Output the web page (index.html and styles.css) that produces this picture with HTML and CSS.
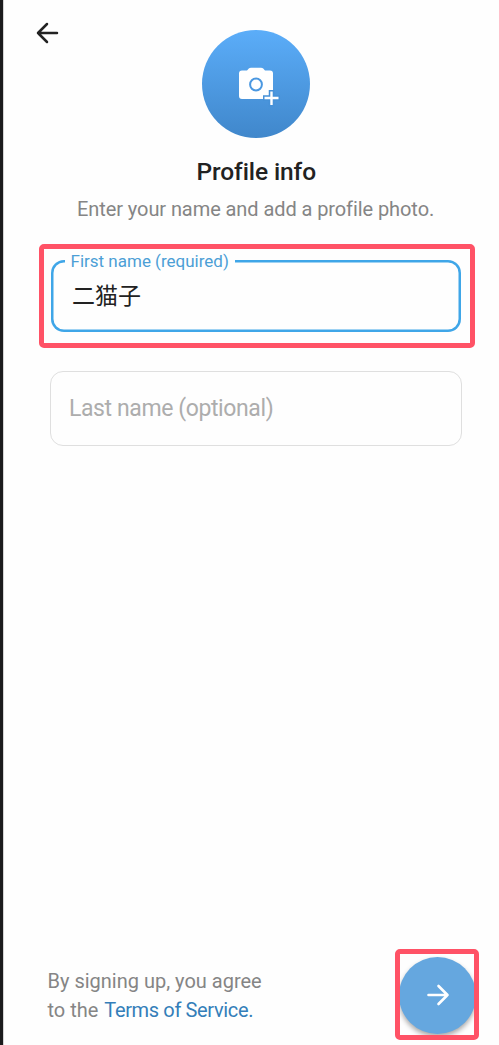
FILE: index.html
```html
<!DOCTYPE html>
<html lang="en">
<head>
<meta charset="utf-8">
<title>Profile info</title>
<link rel="stylesheet" href="styles.css">
</head>
<body>
<main class="screen">
  <header class="top">
    <svg class="back" width="24" height="24" viewBox="0 0 24 24"><path d="M22 12H3M12 3L3 12l9 9"/></svg>
    <div class="avatar">
      <svg class="camera" width="44" height="42" viewBox="0 0 44 42">
        <path class="solid" d="M6 5.500h5l1.800-2q.8-.8 2.200-.8h10q1.400 0 2.200.8l1.800 2h5q3 0 3 3v22.500q0 3-3 3H6q-3 0-3-3v-22.500q0-3 3-3z"/>
        <circle class="ring" cx="20" cy="19.500" r="5.900"/>
        <path class="cut" d="M35.500 25v17M27 33h17"/>
        <path class="plus" d="M35.500 26.500v13.500M28.500 33h14"/>
      </svg>
    </div>
  </header>
  <h1 class="title">Profile info</h1>
  <p class="subtitle">Enter your name and add a profile photo.</p>
  <section class="highlight">
    <div class="field active">
      <label class="label">First name (required)</label>
      <span class="value">二猫子</span>
    </div>
  </section>
  <div class="field empty"><span class="placeholder">Last name (optional)</span></div>
  <footer class="footer">
    <p class="terms"><span class="line">By signing up, you agree</span><span class="line">to the <a class="link">Terms of Service.</a></span></p>
    <div class="next-frame">
      <div class="next"><svg width="24" height="24" viewBox="0 0 24 24"><path d="M2.500 12h19M12.500 3l9 9-9 9"/></svg></div>
    </div>
  </footer>
</main>
</body>
</html>
```
FILE: styles.css
```css
* { box-sizing: border-box; }
body { margin: 0; background: #fefefe; font-family: Roboto, "Noto Sans CJK SC", sans-serif; }
.screen { width: 499px; height: 1045px; border-left: 3px solid #1b1b1d; box-shadow: inset 1px 0 #d4d4d4; display: flex; flex-direction: column; overflow: hidden; }
.top { display: flex; height: 138px; padding: 21px 0 0 32px; }
.back { fill: none; stroke: #222; stroke-width: 2.500; stroke-linecap: round; stroke-linejoin: round; }
.avatar { width: 108px; height: 108px; margin: 9px 0 0 143px; border-radius: 50%; background: linear-gradient(#5badf9, #4087cb); display: flex; align-items: center; justify-content: center; padding: 4px 0 0 4px; }
.solid { fill: #fff; }
.ring { fill: none; stroke: #4b98e1; stroke-width: 2; }
.cut { fill: none; stroke: #4691d8; stroke-width: 5.500; }
.plus { fill: none; stroke: #fff; stroke-width: 2.400; }
.title { margin: 19px 0 0 193.500px; height: 30px; line-height: 30px; font-size: 24.500px; font-weight: 500; color: #222; white-space: nowrap; letter-spacing: -.1px; }
.subtitle { margin: 10px 0 0 74px; height: 24px; line-height: 24px; font-size: 20px; color: #858585; white-space: nowrap; font-weight: 400; letter-spacing: -.08px; }
.highlight { width: 436px; height: 104px; margin: 23px 0 0 36px; padding: 11px 8px 0 7px; border: 5px solid #ff5266; border-radius: 5px; }
.field { display: flex; align-items: center; }
.active { position: relative; width: 410px; height: 72px; box-shadow: inset 0 0 0 2.500px #3fa6e8; border-radius: 13px; padding: 0 0 4px 21px; }
.label { position: absolute; left: 14px; top: -10px; width: 170px; height: 22px; padding-left: 5.500px; line-height: 22px; background: #fefefe; color: #4c9fd6; font-size: 17px; white-space: nowrap; }
.value { font: 23px/30px "Noto Sans CJK SC", sans-serif; color: #222; }
.empty { width: 412px; height: 75px; margin: 23px 0 0 47px; padding-left: 18px; border: 1px solid #dfdfdf; border-radius: 13px; }
.placeholder { color: #adadad; font-size: 23px; letter-spacing: -.4px; white-space: nowrap; }
.footer { display: flex; margin-top: auto; padding: 0 20px 5px 44.500px; justify-content: space-between; }
.terms { margin: 18px 0 0; color: #858585; font-size: 20px; line-height: 29px; white-space: nowrap; }
.line { display: block; }
.link { color: #347eb9; letter-spacing: -.36px; margin-left: 1px; }
.next-frame { width: 84px; height: 91px; border: 5px solid #ff5266; border-radius: 5px; overflow: hidden; display: flex; justify-content: center; align-items: center; padding-top: 1px; }
.next { flex: none; width: 77px; height: 77px; border-radius: 50%; background: #65a7df; box-shadow: 0 3px 5px #0005; display: flex; align-items: center; justify-content: center; padding-left: 1px; }
.next svg { fill: none; stroke: #fff; stroke-width: 2.600; stroke-linecap: round; stroke-linejoin: round; }
```
